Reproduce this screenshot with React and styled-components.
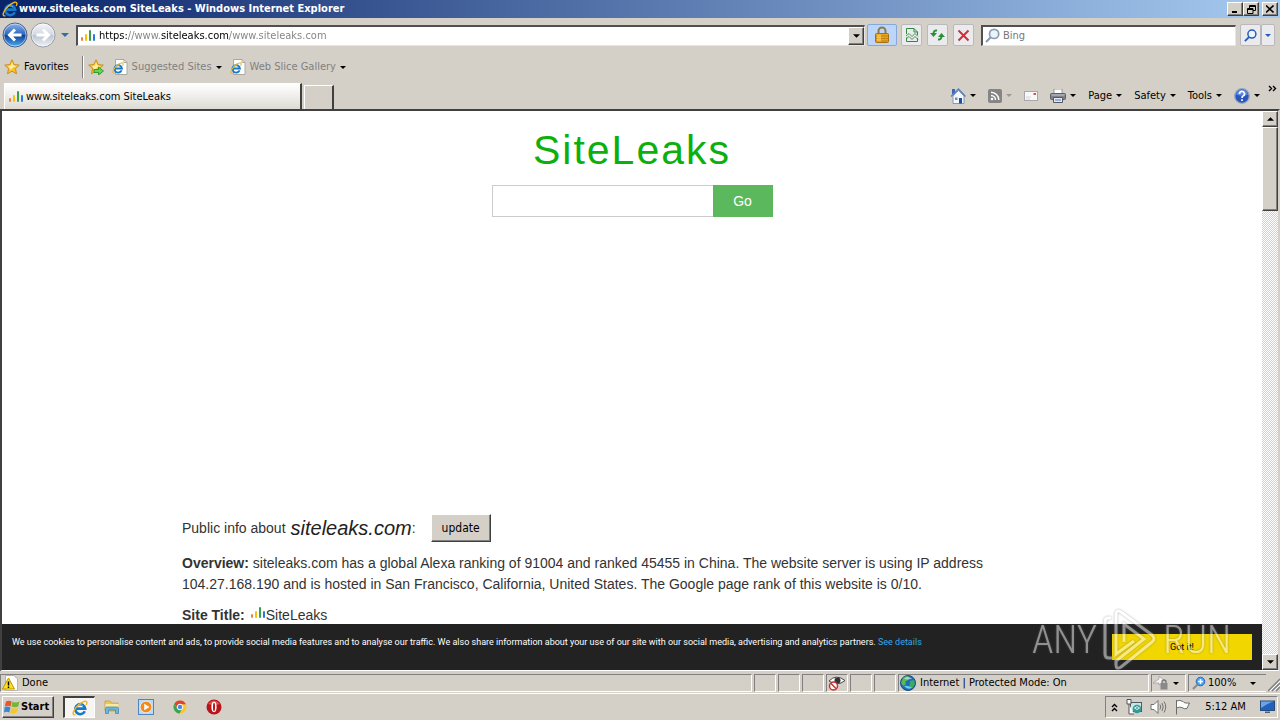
import React from 'react';
import styled, { createGlobalStyle, css } from 'styled-components';

const GlobalStyle = createGlobalStyle`
  * {
    box-sizing: border-box;
  }
  body {
    margin: 0;
    background: #d4d0c8;
    color: #000;
    font-family: "DejaVu Sans Condensed", "DejaVu Sans", Tahoma, sans-serif;
    font-size: 11px;
    line-height: 14px;
  }
  button, input {
    font: inherit;
    color: inherit;
    border-radius: 0;
    margin: 0;
  }
  svg {
    display: block;
    flex: none;
  }
`;

const raised = css`
  border: 1px solid;
  border-color: #fff #404040 #404040 #fff;
  box-shadow: inset -1px -1px 0 #808080;
`;
const sunken = css`
  border: 1px solid;
  border-color: #808080 #fff #fff #808080;
`;

const Desktop = styled.div`
  display: flex;
  flex-direction: column;
  height: 100vh;
  overflow: hidden;
`;

/* window chrome */
const TitleBar = styled.header`
  display: flex;
  align-items: center;
  height: 18px;
  padding: 0 2px;
  gap: 1px;
  background: linear-gradient(to right, #0a246a, #a6caf0);
  color: #fff;
`;
const Title = styled.h1`
  flex: 1;
  margin: 0;
  font-size: 11px;
  font-weight: 700;
  white-space: nowrap;
`;
const WindowButtons = styled.div`
  display: flex;
`;
const WindowButton = styled.button`
  ${raised}
  width: 16px;
  height: 14px;
  padding: 0;
  display: grid;
  place-items: center;
  background: #d4d0c8;
  &:last-child {
    margin-left: 3px;
  }
`;

const AddressRow = styled.div`
  display: flex;
  align-items: center;
  height: 34px;
  padding: 0 5px 0 2px;
`;
const PlainButton = styled.button`
  display: inline-flex;
  align-items: center;
  gap: 4px;
  padding: 0;
  border: 0;
  background: none;
  white-space: nowrap;
  color: ${props => (props.$muted ? '#808080' : '#000')};
`;
const NavButtons = styled.div`
  display: flex;
  align-items: center;
  margin-right: 7px;
  gap: 2px;
`;
const RecentButton = styled(PlainButton)`
  margin-left: 3px;
`;
const FieldBox = styled.div`
  display: flex;
  align-items: center;
  height: 21px;
  padding-left: 2px;
  gap: 3px;
  background: #fff;
  border: 1px solid;
  border-width: 2px 1px 1px 2px;
  border-color: #505050 #e8e6e0 #e8e6e0 #505050;
`;
const AddressBox = styled(FieldBox)`
  flex: 1;
`;
const SearchBox = styled(FieldBox)`
  width: 255px;
  margin: 0 4px 0 7px;
`;
const FieldInput = styled.input`
  flex: 1;
  min-width: 0;
  height: 16px;
  padding: 0;
  border: 0;
  outline: 0;
  background: none;
  &::placeholder {
    color: #777;
    opacity: 1;
  }
`;
/* the host name is black, the rest of the address is grey */
const AddressInput = styled(FieldInput)`
  background: linear-gradient(
    to right,
    #000 28px,
    #808080 28px 62px,
    #000 62px 130px,
    #808080 130px
  );
  background-clip: text;
  -webkit-background-clip: text;
  color: transparent;
`;
const DropButton = styled.button`
  ${raised}
  display: grid;
  place-items: center;
  width: 16px;
  height: 18px;
  padding: 0;
  background: #d4d0c8;
`;
const ToolButton = styled.button`
  display: grid;
  place-items: center;
  width: ${props => props.$width || 21}px;
  height: 22px;
  margin-left: ${props => props.$gap || 0}px;
  padding: 0;
  border: 1px solid ${props => (props.$lock ? '#86a8d8' : '#b8b8c0')};
  border-radius: 2px;
  background: ${props => (props.$lock ? '#bcd6fb' : '#ebebee')};
`;

const FavoritesBar = styled.nav`
  display: flex;
  align-items: center;
  height: 30px;
  padding-left: 4px;
  gap: 8px;
`;
const Separator = styled.div`
  width: 2px;
  height: 22px;
  margin: 0 -4px 0 5px;
  border-left: 1px solid #808080;
  border-right: 1px solid #fff;
`;

const TabRow = styled.div`
  display: flex;
  align-items: flex-end;
  height: 27px;
  padding: 0 3px 0 4px;
`;
const Tab = styled.button`
  display: flex;
  align-items: center;
  gap: 2px;
  width: 298px;
  height: 26px;
  padding: 0 3px;
  border: 1px solid #fff;
  border-right: 2px solid #404040;
  border-bottom: 0;
  background: linear-gradient(#fff, #dedbd4);
  text-align: left;
`;
const NewTab = styled.button`
  width: 30px;
  height: 24px;
  margin-left: 2px;
  border: 1px solid #fff;
  border-right: 2px solid #404040;
  border-bottom: 0;
  background: #d4d0c8;
`;
const CommandBar = styled.div`
  flex: 1;
  display: flex;
  justify-content: flex-end;
  align-items: center;
  align-self: stretch;
  gap: 12px;
`;
const More = styled.button`
  align-self: flex-start;
  margin-left: -4px;
  padding: 3px 0 0;
  border: 0;
  background: none;
`;

/* page */
const Viewport = styled.div`
  position: relative;
  flex: 1;
  min-height: 0;
  display: flex;
  border: solid #404040;
  border-width: 2px 2px 1px;
  border-right-color: #d4d0c8;
  border-bottom-color: #fff;
  background: #fff;
`;
const Page = styled.main`
  flex: 1;
  overflow: hidden;
  color: #333;
  font-family: "Liberation Sans", Arial, sans-serif;
  font-size: 14px;
  line-height: 21px;
`;
const Brand = styled.h2`
  margin: 15px 0 11px;
  color: #0caf0c;
  font-size: 41px;
  font-weight: 400;
  line-height: 48px;
  letter-spacing: 2px;
  text-align: center;
`;
const SearchForm = styled.form`
  display: flex;
  justify-content: center;
`;
const SiteInput = styled.input`
  width: 221px;
  height: 32px;
  padding: 0 8px;
  border: 1px solid #ccc;
  border-right: 0;
  outline: 0;
`;
const GoButton = styled.button`
  width: 60px;
  height: 32px;
  border: 0;
  background: #5cb85c;
  color: #fff;
`;
const AdSlot = styled.div`
  height: 297px;
`;
const Article = styled.article`
  max-width: 900px;
  margin: 0 auto;
  p {
    margin: 0 0 10px;
  }
`;
const PublicInfo = styled.div`
  display: flex;
  align-items: center;
  height: 28px;
  margin-bottom: 11px;
  em {
    margin-left: 5px;
    font-size: 20px;
    color: #222;
  }
`;
const UpdateButton = styled.button`
  ${raised}
  height: 28px;
  margin-left: 15px;
  padding: 0 10px;
  background: #d4d0c8;
  color: #000;
  font-family: "DejaVu Sans Condensed", sans-serif;
  font-size: 12px;
`;
const SiteTitle = styled.p`
  display: flex;
  svg {
    margin-left: 5px;
  }
`;

const CookieBar = styled.aside`
  position: absolute;
  left: 0;
  right: 16px;
  bottom: 0;
  display: flex;
  justify-content: space-between;
  height: 46px;
  padding: 10px;
  background: #222;
  color: #fff;
  font-family: Roboto, "Open Sans", sans-serif;
  font-size: 9px;
  line-height: 16px;
  a {
    color: #31a8f0;
    text-decoration: none;
  }
`;
const GotIt = styled.button`
  width: 140px;
  height: 26px;
  padding: 0;
  border: 0;
  background: #f1d600;
  color: #000;
`;
const Watermark = styled.div`
  position: absolute;
  right: 47px;
  bottom: -2px;
  display: flex;
  align-items: center;
  gap: 5px;
  height: 64px;
  color: #fff;
  opacity: 0.5;
  filter: drop-shadow(0 0 1px #666);
  pointer-events: none;
  font-family: "Roboto Condensed", Roboto, sans-serif;
  font-size: 39px;
  font-weight: 300;
  line-height: 64px;
`;

const Scrollbar = styled.div`
  display: flex;
  flex-direction: column;
  width: 16px;
  background: repeating-conic-gradient(#fff 0 25%, #d4d0c8 0 50%) 0 0 / 2px 2px;
`;
const ScrollButton = styled.button`
  ${raised}
  display: grid;
  place-items: center;
  height: 16px;
  padding: 0;
  background: #d4d0c8;
`;
const Thumb = styled.div`
  ${raised}
  height: 84px;
  margin-bottom: auto;
  background: #d4d0c8;
`;

/* status bar and taskbar */
const StatusBar = styled.footer`
  display: flex;
  gap: 2px;
  height: 23px;
  padding: 3px 0 1px;
  border-bottom: 1px solid #fff;
`;
const Pane = styled.div`
  ${sunken}
  display: flex;
  align-items: center;
  gap: 4px;
  width: ${props => props.$width}px;
  padding-left: 1px;
  white-space: nowrap;
`;
const DonePane = styled(Pane)`
  flex: 1;
`;
const ZoomPane = styled(Pane)`
  padding: 0 10px 0 3px;
  gap: 2px;
  border-right: 0;
  svg:last-child {
    margin-left: auto;
  }
`;
const Taskbar = styled.footer`
  display: flex;
  align-items: center;
  height: 26px;
  padding: 1px 2px;
`;
const StartButton = styled.button`
  ${raised}
  display: flex;
  align-items: center;
  gap: 1px;
  height: 22px;
  width: 52px;
  padding: 0 1px;
  background: #d4d0c8;
  font-weight: 700;
`;
const TaskButton = styled.button`
  display: grid;
  place-items: center;
  width: ${props => (props.$active ? 32 : 34)}px;
  height: 22px;
  padding: 0;
  border: 1px solid transparent;
  background: none;
  ${props =>
    props.$active &&
    css`
      margin-left: 9px;
      border-width: 2px 1px 1px 2px;
      border-color: #404040 #fff #fff #404040;
      background: #f6f5f3;
    `}
`;
const Tray = styled.div`
  ${sunken}
  display: flex;
  align-items: center;
  gap: 8px;
  height: 22px;
  width: 173px;
  margin-left: auto;
  padding: 0 2px 0 5px;
  time {
    margin: 0 auto;
  }
`;

const Caret = ({ color = '#000', up, size = 6 }) => (
  <svg width={size} height={size === 6 ? 3 : 4} viewBox="0 0 8 4">
    <path d={up ? 'M0 4L4 0L8 4z' : 'M0 0L4 4L8 0z'} fill={color} />
  </svg>
);

const BarsIcon = () => (
  <svg width="16" height="16" viewBox="0 0 16 16">
    <rect x="1" y="9" width="2" height="4" rx="1" fill="#e8873c" />
    <rect x="5" y="6" width="2" height="7" rx="1" fill="#f3c10e" />
    <rect x="9" y="2" width="2" height="11" rx="1" fill="#38a148" />
    <rect x="13" y="6" width="2" height="7" rx="1" fill="#2b78e4" />
  </svg>
);

const IeGlyph = () => (
  <g fill="none">
    <path d="M12.8 11.2A5 5 0 1 1 13.2 8.6H4.2" stroke="#1979c9" strokeWidth="2.6" />
    <path d="M4.5 7.2a3.8 3.8 0 0 1 6.5-1" stroke="#6cc4f5" strokeWidth="1" />
    <path d="M3.4 14.6C1.2 15.6 .4 13.6 2 10.6C4.3 6 9.3 1.9 12.8 1.2C15.4 .7 15.3 3 14.2 5" stroke="#f1b521" strokeWidth="1.4" />
  </g>
);
const IeIcon = ({ size = 16 }) => (
  <svg width={size} height={size} viewBox="0 0 16 16"><IeGlyph /></svg>
);
const IePageIcon = () => (
  <svg width="16" height="16" viewBox="0 0 16 16">
    <path d="M3.5 .5H12l3 3V15.5H3.5z" fill="#fff" stroke="#aaa8a0" />
    <path d="M12 .5V3.5H15" fill="none" stroke="#aaa8a0" />
    <svg y="3" width="12" height="12" viewBox="0 0 16 16"><IeGlyph /></svg>
  </svg>
);

const NavIcon = ({ forward }) => (
  <svg width="26" height="26" viewBox="0 0 26 26">
    <defs>
      <linearGradient id={forward ? 'fwd' : 'back'} x1="0" y1="0" x2="0" y2="1">
        <stop offset="0" stopColor={forward ? '#f4f6f9' : '#8ab4ea'} />
        <stop offset="0.48" stopColor={forward ? '#d3d9e2' : '#2e65bd'} />
        <stop offset="0.52" stopColor={forward ? '#bcc5d2' : '#0f3f96'} />
        <stop offset="1" stopColor={forward ? '#f1f4f8' : '#4fb2f5'} />
      </linearGradient>
    </defs>
    <circle cx="13" cy="13" r="12" fill={forward ? 'url(#fwd)' : 'url(#back)'} stroke={forward ? '#9499a5' : '#4c5f8e'} />
    <circle cx="13" cy="13" r="11" fill="none" stroke="#fff" strokeOpacity="0.5" />
    <path
      d={forward ? 'M6.5 13H18M13 7.5L18.5 13L13 18.5' : 'M19.5 13H8M13 7.5L7.5 13L13 18.5'}
      fill="none"
      stroke="#fff"
      strokeWidth="3"
    />
  </svg>
);

const starPath = 'M8 .8L10.2 5.5L15.3 6.1L11.5 9.6L12.5 14.8L8 12.2L3.5 14.8L4.5 9.6L.7 6.1L5.8 5.5z';
const StarIcon = ({ add }) => (
  <svg width="16" height="16" viewBox="0 0 16 16">
    <path d={starPath} fill="#fbc02c" stroke="#c58a1c" strokeWidth="0.9" />
    <path d="M8 3L9.3 6.5L12.5 7L9 8.5L7 11L4 7L7 6.5z" fill="#fff0a0" />
    {add && <path d="M6 10.5H10.5V8L15.5 12L10.5 16V13.5H6z" fill="#5fd64c" stroke="#238a25" strokeWidth="0.8" />}
  </svg>
);

const LockIcon = () => (
  <svg width="16" height="18" viewBox="0 0 16 18">
    <path d="M4.5 8V5a3.5 3.5 0 0 1 7 0V8" fill="none" stroke="#8c7a4a" strokeWidth="2" />
    <rect x="1.5" y="7.5" width="13" height="9" rx="1" fill="#e9a41c" stroke="#a86e0c" />
    <path d="M2 10H14M2 12.5H14M2 15H14" stroke="#b87a10" strokeWidth="0.8" />
    <path d="M3 8.5H7V15.5H3z" fill="#ffd766" fillOpacity="0.6" />
  </svg>
);
const CompatIcon = () => (
  <svg width="14" height="16" viewBox="0 0 14 16" fill="none" stroke="#2f8b3c">
    <path d="M1.5 7V1.5H9L12.5 5V8M1.5 10.5V14.5H12.5V11M9 1.5V5H12.5" />
    <path d="M1 9L4 6.5L7 9.5L10 6.5L13 9.5M1 12L4 9.5L7 12.5L10 9.5L13 12.5" strokeWidth="0.9" />
  </svg>
);
const RefreshIcon = () => (
  <svg width="15" height="14" viewBox="0 0 15 14" fill="none" stroke="#2a8f37" strokeWidth="2">
    <path d="M7 2.5Q3.5 2 3.5 6" />
    <path d="M8 11.5Q11.500 12 11.500 8" />
    <path d="M0 5H7L3.500 9z M8 9H15L11.500 5z" fill="#2a8f37" stroke="none" />
  </svg>
);
const StopIcon = () => (
  <svg width="13" height="13" viewBox="0 0 13 13">
    <path d="M1.5 1.5L11.5 11.5M11.5 1.5L1.5 11.5" stroke="#cf2f3a" strokeWidth="2" />
  </svg>
);
const SearchIcon = ({ color = '#2459bd', plus, size = 14 }) => (
  <svg width={size} height={size} viewBox="0 0 14 14" fill="none">
    <circle cx="8.5" cy="5.5" r="4.3" fill={plus ? '#4aa3ee' : '#eaf4fc'} stroke={color} strokeWidth={plus ? 1 : 1.6} />
    <path d="M5.3 8.7L1 13" stroke={plus ? '#8a8a8a' : color} strokeWidth="2" />
    {plus && <path d="M8.5 3V8M6 5.5H11" stroke="#fff" strokeWidth="1.5" />}
  </svg>
);
const HomeIcon = () => (
  <svg width="16" height="16" viewBox="0 0 16 16">
    <path d="M2 1H5V6H2z" fill="#3c67b4" />
    <path d="M3 8L8.5 2.5L14 8V15.5H3z" fill="#f3f6fb" stroke="#6e86b0" strokeWidth="0.8" />
    <path d="M1 8.5L8.5 1L15.5 8.5" fill="none" stroke="#5d80bd" strokeWidth="1.4" />
    <path d="M9 10H12V15.5H9z" fill="#224e9c" />
    <path d="M5 9.5H7.5V12H5z" fill="#5e8fd0" />
  </svg>
);
const FeedIcon = () => (
  <svg width="14" height="14" viewBox="0 0 14 14">
    <rect width="14" height="14" rx="2" fill="#858585" />
    <circle cx="4" cy="10" r="1.3" fill="#fff" />
    <path d="M3 6.5A4.5 4.5 0 0 1 7.5 11M3 3.2A7.8 7.8 0 0 1 10.8 11" fill="none" stroke="#fff" strokeWidth="1.5" />
  </svg>
);
const MailIcon = () => (
  <svg width="14" height="10" viewBox="0 0 14 10">
    <rect x=".5" y=".5" width="13" height="9" fill="#f8f8f8" stroke="#a7a7ad" />
    <path d="M9.5 2H12V4H9.5z" fill="#d1545c" />
    <path d="M2 6H7M2 8H6" stroke="#d6d6da" />
  </svg>
);
const PrintIcon = () => (
  <svg width="16" height="14" viewBox="0 0 16 14">
    <path d="M4 0H12V5H4z" fill="#fff" stroke="#82868e" strokeWidth="0.8" />
    <rect x=".5" y="4.5" width="15" height="6" rx="1" fill="#80838a" stroke="#5c5f65" />
    <path d="M1.5 6H14.5" stroke="#c6c9cf" />
    <path d="M3.5 8.5H12.5V13.5H3.5z" fill="#e5ecf7" stroke="#53565c" />
    <path d="M5 11H11" stroke="#4679bc" />
  </svg>
);
const HelpIcon = () => (
  <svg width="16" height="16" viewBox="0 0 16 16">
    <circle cx="8" cy="8" r="7.3" fill="#2a55bb" stroke="#98a4bf" strokeWidth="1.3" />
    <path d="M2 6.5A6.2 6.2 0 0 1 14 6.5Q8 9 2 6.5" fill="#6f9cec" fillOpacity="0.7" />
    <path d="M5.5 6A2.5 2.5 0 1 1 8.7 8.2Q8 8.5 8 10M8 11.2V13" fill="none" stroke="#fff" strokeWidth="1.7" />
  </svg>
);
const WarningIcon = () => (
  <svg width="16" height="16" viewBox="0 0 16 16">
    <path d="M3.5 .5H12L15.5 4V15.5H3.5z" fill="#fff" stroke="#b8b4ac" />
    <path d="M6.5 3L12.5 14H.5z" fill="#ffe01f" stroke="#b99500" />
    <path d="M6.5 6.5V10.5M6.5 11.5V13" stroke="#000" strokeWidth="1.5" />
  </svg>
);
const PrivacyIcon = () => (
  <svg width="18" height="16" viewBox="0 0 18 16">
    <path d="M1 6Q8 -1.5 17 5.5Q9 12 1 6z" fill="#fff" stroke="#444" />
    <circle cx="9.5" cy="5.5" r="3" fill="#2d3438" />
    <circle cx="5.5" cy="11" r="4" fill="#fff" stroke="#c93030" strokeWidth="1.5" />
    <path d="M2.8 8.3L8.2 13.7" stroke="#c93030" strokeWidth="1.5" />
  </svg>
);
const GlobeIcon = () => (
  <svg width="16" height="16" viewBox="0 0 16 16">
    <circle cx="8" cy="8" r="7.5" fill="#2469b8" stroke="#194a83" />
    <path d="M3 3Q6 0 9 1.5L8 5L5 7L6 9L3.5 11L1 8z" fill="#58bb55" />
    <path d="M10 6L14 5L15 9L12 13.5L9.5 11z" fill="#3cab5a" />
    <path d="M4 11Q8 15.500 12 12.500Q8 10 4 11" fill="#5fd0f0" />
    <path d="M4 3.5Q8 .5 12 3.5Q8 5.5 4 3.5" fill="#e4f8ff" fillOpacity="0.6" />
  </svg>
);
const ShieldIcon = () => (
  <svg width="16" height="14" viewBox="0 0 16 14">
    <path d="M0 7L6 3V0L12 5L6 9V7z" fill="#f4f4f4" stroke="#9a9a9a" strokeWidth="0.7" />
    <path d="M9 7.5V6A2 2 0 0 1 13 6V7.5" fill="none" stroke="#777" strokeWidth="1.3" />
    <rect x="7.5" y="7" width="7" height="6.5" fill="#898989" />
  </svg>
);
const GripIcon = () => (
  <svg width="12" height="18" viewBox="0 0 12 18">
    <path d="M0 17L12 5M4 17L12 9M8 17L12 13" stroke="#808080" strokeWidth="1.5" />
    <path d="M2 17L12 7M6 17L12 11" stroke="#fff" />
  </svg>
);
const WindowsIcon = () => (
  <svg width="16" height="16" viewBox="0 0 15 15">
    <path d="M1.8 2.3Q4.5 .8 7.2 2.3L6.2 7Q3.8 5.6 .8 7z" fill="#e8562a" />
    <path d="M8 2.6Q11 4 14.5 2.3L13.3 7Q10.5 8.3 7 7z" fill="#72b63b" />
    <path d="M.6 7.8Q3.5 6.4 6 8L5 12.7Q2.3 11.3 0 12.7z" fill="#3b85d4" />
    <path d="M6.8 8.2Q10 9.5 13.1 8L12 12.7Q9 14.3 5.8 12.8z" fill="#f7c62a" />
  </svg>
);
const ExplorerIcon = () => (
  <svg width="16" height="16" viewBox="0 0 16 16">
    <path d="M1 2H6L7.5 4H14V12H1z" fill="#f0c84c" stroke="#c59a32" strokeWidth="0.7" />
    <path d="M1.5 5H14.5V9H1.5z" fill="#fbe9a0" />
    <path d="M1.5 14.5V9.5Q1.5 8 3 8H13Q14.5 8 14.5 9.5V14.5H11.5V11H4.5V14.5z" fill="#68b7df" stroke="#3e83b4" strokeWidth="0.7" />
  </svg>
);
const MediaIcon = () => (
  <svg width="16" height="16" viewBox="0 0 16 16">
    <rect x=".5" y=".5" width="15" height="15" fill="#b9dbf6" stroke="#4e86c3" />
    <circle cx="8" cy="8" r="5.8" fill="#f58a1a" stroke="#fff" strokeWidth="0.6" />
    <path d="M6.2 4.8L11.5 8L6.2 11.2z" fill="#fff" />
  </svg>
);
const ChromeIcon = () => (
  <svg width="14" height="14" viewBox="0 0 14 14">
    <circle cx="7" cy="7" r="6.5" fill="#fbc62d" />
    <path d="M1.4 3.7A6.5 6.5 0 0 1 12.9 4.2H7A2.9 2.9 0 0 0 4.3 8z" fill="#dd4335" />
    <path d="M1.4 3.7A6.5 6.5 0 0 0 6.5 13.5L9.3 8.8L4.5 8.5z" fill="#38a457" />
    <circle cx="7" cy="7" r="2.8" fill="#4b88e8" stroke="#fff" strokeWidth="1" />
  </svg>
);
const OperaIcon = () => (
  <svg width="16" height="16" viewBox="0 0 16 16">
    <circle cx="8" cy="8" r="7.5" fill="#b8141a" />
    <path d="M2 5Q8 -2 14 5Q8 7 2 5" fill="#e2504f" />
    <ellipse cx="8" cy="8" rx="2.6" ry="5.2" fill="#fff" />
    <ellipse cx="8" cy="8" rx="1" ry="4.2" fill="#b8141a" />
  </svg>
);
const ChevronsIcon = () => (
  <svg width="7" height="9" viewBox="0 0 7 9">
    <path d="M1 4L3.5 1.5L6 4M1 8L3.5 5.5L6 8" fill="none" stroke="#000" strokeWidth="1.4" />
  </svg>
);
const MoreIcon = () => (
  <svg width="9" height="7" viewBox="0 0 9 7">
    <path d="M1 1L3.5 3.5L1 6M5 1L7.5 3.5L5 6" fill="none" stroke="#000" strokeWidth="1.4" />
  </svg>
);
const NetworkIcon = () => (
  <svg width="16" height="16" viewBox="0 0 16 16">
    <rect x="4.5" y="3.5" width="11" height="9" fill="#c7e7e6" stroke="#4d5a60" />
    <circle cx="11" cy="10" r="4.3" fill="#359a96" />
    <path d="M8.5 9Q11 6 13.5 9Q11 12 8.5 9" fill="none" stroke="#d8f6f1" />
    <path d="M1 .5H5V5H1zM3 5V15H8" fill="#fff" stroke="#555" />
  </svg>
);
const SpeakerIcon = () => (
  <svg width="17" height="16" viewBox="0 0 17 16" fill="none" stroke="#71716e">
    <path d="M1 5.5H4L8 1.5V14.5L4 10.5H1z" fill="#fff" />
    <path d="M10 5.5Q11.5 8 10 10.5M12 4Q14.5 8 12 12M14 2.5Q17.5 8 14 13.5" />
  </svg>
);
const FlagIcon = () => (
  <svg width="16" height="16" viewBox="0 0 16 16">
    <path d="M1.5 1V15.5M1.5 2Q5 .5 8 2.5Q9 4.5 14.5 4Q13 7 12 9.5Q9 10.5 7 8.5Q4.5 7.5 1.5 9z" fill="#fff" stroke="#6d6d6a" />
  </svg>
);
const DesktopIcon = () => (
  <svg width="15" height="14" viewBox="0 0 15 14">
    <rect x=".5" y="1" width="14" height="9.5" fill="#2262bd" stroke="#294b7b" />
    <path d="M1 1.5H14Q8 3 1 8z" fill="#69a5e8" />
    <path d="M5 11.5H10V13H5z" fill="#4c5f78" />
  </svg>
);
const PlayMark = () => (
  <svg width="56" height="64" viewBox="0 0 56 64" fill="none" stroke="currentColor" strokeWidth="3">
    <path d="M9 10H6Q3 10 3 14V46Q3 50 7 50H10" />
    <path d="M14 34V7Q14 1 19 4L50 27Q54 31 50 34L19 59Q14 62 14 57V53L42 31L22 16V34" />
    <path d="M14 34V46L32 33" />
  </svg>
);

const FavLink = ({ children }) => (
  <PlainButton $muted>
    <IePageIcon />
    {children}
    <Caret />
  </PlainButton>
);

const App = () => (
  <Desktop>
    <GlobalStyle />
    <TitleBar>
      <IeIcon />
      <Title>www.siteleaks.com SiteLeaks - Windows Internet Explorer</Title>
      <WindowButtons>
        <WindowButton aria-label="Minimize">
          <svg width="8" height="8"><path d="M1 6H6V8H1z" /></svg>
        </WindowButton>
        <WindowButton aria-label="Restore">
          <svg width="9" height="9" fill="none" stroke="#000"><path d="M2.5 3V.5H8.5V5.5H6M2.5 1.5H8.5M.5 3.5H6V8.5H.5zM.5 4.5H6" /></svg>
        </WindowButton>
        <WindowButton aria-label="Close">
          <svg width="8" height="8"><path d="M0 .5L7.5 7.5M7.5 .5L0 7.5" stroke="#000" strokeWidth="1.6" /></svg>
        </WindowButton>
      </WindowButtons>
    </TitleBar>

    <AddressRow>
      <NavButtons>
        <PlainButton aria-label="Back"><NavIcon /></PlainButton>
        <PlainButton aria-label="Forward"><NavIcon forward /></PlainButton>
        <RecentButton aria-label="Recent pages"><Caret color="#2f6ca8" size={8} /></RecentButton>
      </NavButtons>
      <AddressBox>
        <BarsIcon />
        <AddressInput aria-label="Address" defaultValue="https://www.siteleaks.com/www.siteleaks.com" />
        <DropButton aria-label="Show addresses"><Caret size={7} /></DropButton>
      </AddressBox>
      <ToolButton $lock $width={30} $gap={2} aria-label="Security report"><LockIcon /></ToolButton>
      <ToolButton $gap={4} aria-label="Compatibility view"><CompatIcon /></ToolButton>
      <ToolButton $gap={5} aria-label="Refresh"><RefreshIcon /></ToolButton>
      <ToolButton $gap={5} aria-label="Stop"><StopIcon /></ToolButton>
      <SearchBox>
        <SearchIcon color="#8b9bb0" size={15} />
        <FieldInput aria-label="Search" placeholder="Bing" />
      </SearchBox>
      <ToolButton aria-label="Search the web"><SearchIcon size={13} /></ToolButton>
      <ToolButton $width={14} aria-label="Search options"><Caret color="#2459bd" /></ToolButton>
    </AddressRow>

    <FavoritesBar>
      <PlainButton><StarIcon />Favorites</PlainButton>
      <Separator />
      <PlainButton aria-label="Add to favorites"><StarIcon add /></PlainButton>
      <FavLink>Suggested Sites</FavLink>
      <FavLink>Web Slice Gallery</FavLink>
    </FavoritesBar>

    <TabRow>
      <Tab><BarsIcon />www.siteleaks.com SiteLeaks</Tab>
      <NewTab aria-label="New tab" />
      <CommandBar>
        <PlainButton aria-label="Home"><HomeIcon /><Caret /></PlainButton>
        <PlainButton aria-label="Feeds"><FeedIcon /><Caret color="#999" /></PlainButton>
        <PlainButton aria-label="Read mail"><MailIcon /></PlainButton>
        <PlainButton aria-label="Print"><PrintIcon /><Caret /></PlainButton>
        <PlainButton>Page<Caret /></PlainButton>
        <PlainButton>Safety<Caret /></PlainButton>
        <PlainButton>Tools<Caret /></PlainButton>
        <PlainButton aria-label="Help"><HelpIcon /><Caret /></PlainButton>
        <More aria-label="More commands"><MoreIcon /></More>
      </CommandBar>
    </TabRow>

    <Viewport>
      <Page>
        <Brand>SiteLeaks</Brand>
        <SearchForm onSubmit={e => e.preventDefault()}>
          <SiteInput aria-label="Site" />
          <GoButton>Go</GoButton>
        </SearchForm>
        <AdSlot />
        <Article>
          <PublicInfo>
            Public info about <em>siteleaks.com</em>:
            <UpdateButton>update</UpdateButton>
          </PublicInfo>
          <p>
            <b>Overview:</b> siteleaks.com has a global Alexa ranking of 91004 and ranked 45455 in China. The website server is using IP address
            <br />
            104.27.168.190 and is hosted in San Francisco, California, United States. The Google page rank of this website is 0/10.
          </p>
          <SiteTitle><b>Site Title:</b><BarsIcon />SiteLeaks</SiteTitle>
        </Article>
      </Page>
      <Scrollbar>
        <ScrollButton aria-label="Scroll up"><Caret up size={7} /></ScrollButton>
        <Thumb />
        <ScrollButton aria-label="Scroll down"><Caret size={7} /></ScrollButton>
      </Scrollbar>
      <CookieBar>
        <div>
          We use cookies to personalise content and ads, to provide social media features and to analyse our traffic. We also share information about your use of our site with our social media, advertising and analytics partners. <a href="#details">See details</a>
        </div>
        <GotIt>Got it!</GotIt>
      </CookieBar>
      <Watermark>
        <span>ANY</span>
        <PlayMark />
        <span>RUN</span>
      </Watermark>
    </Viewport>

    <StatusBar>
      <DonePane><WarningIcon />Done</DonePane>
      <Pane $width={22} />
      <Pane $width={22} />
      <Pane $width={22} />
      <Pane $width={22}><PrivacyIcon /></Pane>
      <Pane $width={22} />
      <Pane $width={22} />
      <Pane $width={251}><GlobeIcon />Internet | Protected Mode: On</Pane>
      <Pane $width={35}><ShieldIcon /><Caret /></Pane>
      <ZoomPane $width={78}><SearchIcon plus color="#2b6cb5" />100%<Caret /></ZoomPane>
      <GripIcon />
    </StatusBar>

    <Taskbar>
      <StartButton><WindowsIcon />Start</StartButton>
      <TaskButton $active aria-label="Internet Explorer"><IeIcon /></TaskButton>
      <TaskButton aria-label="Explorer"><ExplorerIcon /></TaskButton>
      <TaskButton aria-label="Media Player"><MediaIcon /></TaskButton>
      <TaskButton aria-label="Chrome"><ChromeIcon /></TaskButton>
      <TaskButton aria-label="Opera"><OperaIcon /></TaskButton>
      <Tray>
        <ChevronsIcon />
        <NetworkIcon />
        <SpeakerIcon />
        <FlagIcon />
        <time>5:12 AM</time>
        <DesktopIcon />
      </Tray>
    </Taskbar>
  </Desktop>
);

export default App;
